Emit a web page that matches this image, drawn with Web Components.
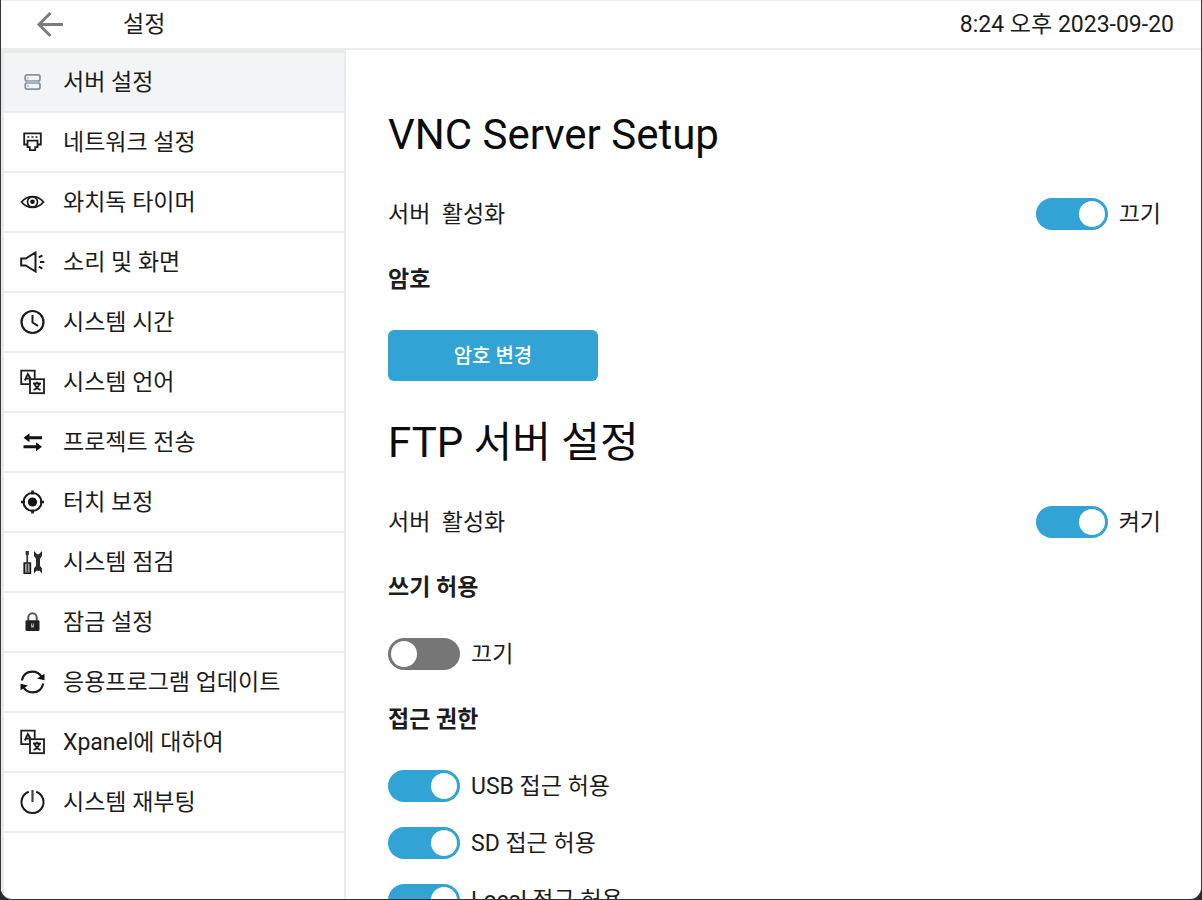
<!DOCTYPE html>
<html lang="ko">
<head>
<meta charset="utf-8">
<meta name="viewport" content="width=device-width, initial-scale=1">
<title>설정</title>
<style>
  html { background: #2b2b2e; }
  body { margin: 0; font-family: Roboto, "Noto Sans CJK KR", sans-serif; font-size: 23px; line-height: 32px; color: #1c1c1c; }
</style>
</head>
<body>
<settings-app></settings-app>
<script>
const ICONS = {
  server: '<g fill="none" stroke="#87929c" stroke-width="1.8"><rect x="5.2" y="4.800" width="14.800" height="6.400" rx="2.200"/><rect x="5.200" y="12.800" width="14.800" height="6.400" rx="2.200"/></g><path d="M6.500 11.200h12v1.600h-12z" fill="#b4bbc1"/><path d="M8 7.300v1.800M8 15.100v1.800" stroke="#87929c"/>',
  network: '<path d="M7.500 14.500H4.200V3.300h16.600v11.200h-3.300M7.500 10.700h10v6.500h-2.300v3H9.800v-3H7.500z" fill="none" stroke="#1c1c1c" stroke-width="1.800"/><path d="M7.300 7h2M11.500 7h2M15.500 7h2" stroke="#1c1c1c" stroke-width="1.600"/>',
  eye: '<path d="M1.500 12C5 7.800 8.500 6.600 12.500 6.600S20 7.800 23.500 12C20 16.200 16.500 17.400 12.500 17.400S5 16.200 1.500 12z" fill="none" stroke="#1c1c1c" stroke-width="1.900"/><circle cx="12.500" cy="12" r="5" fill="none" stroke="#1c1c1c" stroke-width="1.700"/><circle cx="12.500" cy="11.700" r="2.300" fill="#111"/>',
  sound: '<path d="M1.200 8.500h4.500L15.500 2.500v19L5.700 15.500H1.200z" fill="none" stroke="#1c1c1c" stroke-width="2"/><path d="M18.800 7.400l3.600-2M20 12h4.300M18.800 16.600l3.600 2" stroke="#1c1c1c" stroke-width="2"/>',
  clock: '<circle cx="12.500" cy="12" r="11" fill="none" stroke="#1c1c1c" stroke-width="2.200"/><path d="M12.500 5v7.500l5.500 3.300" fill="none" stroke="#1c1c1c" stroke-width="2"/>',
  language: '<g fill="none" stroke="#1c1c1c" stroke-width="1.800"><path d="M9.500 14.200H1.200V.7h13.500v8"/><rect x="10" y="9.200" width="14" height="14"/><path d="M4.800 10.500L7.900 4l2.600 4.500M6 8.700h4"/><path d="M13 13.500h8M17 11.700v1.800M19.300 14c-.8 3-3 5-5.800 6M14.700 14c.8 3 3 5 5.800 6"/></g>',
  transfer: '<path d="M3.500 7.800l6-4.500v3H22v3H9.500v3zM22 16.700l-6-4.500v3H3.500v3H16v3z" fill="#111"/>',
  target: '<circle cx="12.500" cy="12" r="9" fill="none" stroke="#1c1c1c" stroke-width="2.100"/><circle cx="12.500" cy="12" r="4.600" fill="#111"/><path d="M12.500.5v4M12.500 19.500v4M1 12h4M20 12h4" stroke="#1c1c1c" stroke-width="2.600"/>',
  tools: '<path d="M5.600 1h3.300v3.500l-.8 1v7.300H6.400V5.500l-.8-1z" fill="#333"/><path d="M4.200 13h6.200v10.300H4.200z" fill="#999" stroke="#1c1c1c" stroke-width="1.600"/><path d="M7.300 13.500v9" stroke="#333"/><path d="M14 1l3.200 3.300h1.600L22 1v5l-2 2.700v7L22 18.500v5l-2.400-2.700h-3.200L14 23.500v-5l2-2.800v-7L14 6z" fill="#2a2a2a"/>',
  lock: '<path d="M8.300 11V7.500a4.200 4.200 0 0 1 8.400 0V11" fill="none" stroke="#555" stroke-width="2"/><rect x="5.500" y="10.300" width="14" height="10.700" rx="1.200" fill="#222"/><path d="M11 13.500h3v4h-3z" fill="#aaa"/><path d="M12 13.500h1v2h-1z" fill="#333"/>',
  refresh: '<path d="M1.800 10.500C3 4.800 7 1.600 12.500 1.600c4 0 7.200 2 9.200 5.200M23.200 13.500c-1.200 5.700-5.200 8.900-10.700 8.900-4 0-7.200-2-9.200-5.200" fill="none" stroke="#1c1c1c" stroke-width="2.200"/><path d="M24.500 3.800v6.500L17 8.600zM.5 20.200v-6.500L8 15.400z" fill="#111"/>',
  power: '<path d="M8.800 1.700a11 11 0 1 0 7.400 0" fill="none" stroke="#1c1c1c" stroke-width="2.100"/><path d="M12.500 0v12" stroke="#444" stroke-width="2.200"/>'
};

function define(name, build) {
  customElements.define(name, class extends HTMLElement {
    connectedCallback() {
      if (this.shadowRoot) return;
      this.attachShadow({ mode: 'open' }).innerHTML = build(this);
    }
  });
}

define('settings-header', () => `
<style>
  :host { display: flex; flex: none; box-sizing: border-box; height: 50px; align-items: center; padding: 0 27px 0 35px; border-top: 1px solid #ececec; border-bottom: 2px solid #e9eaea; }
  button { display: flex; padding: 0; border: 0; background: none; }
  h1 { flex: 1; margin: 0 0 0 59px; font: inherit; }
  svg { display: block; }
</style>
<button aria-label="뒤로"><svg width="28" height="28" viewBox="0 0 28 28"><path d="M14.500 2L3 13.500l11.500 11.500M3.500 13.500H27" fill="none" stroke="#7c7c7c" stroke-width="3"/></svg></button>
<h1><slot></slot></h1>
<slot name="time"></slot>`);

define('nav-item', el => `
<style>
  :host { display: block; border-bottom: 2px solid #ebecec; }
  :host([active]) { background: #f3f4f6; }
  a { display: flex; align-items: center; height: 58px; padding-left: 16px; gap: 18px; color: inherit; text-decoration: none; }
  svg { flex: none; display: block; overflow: visible; }
  span { padding-top: 2px; }
</style>
<a href="#${el.getAttribute('icon')}"${el.hasAttribute('active') ? ' aria-current="page"' : ''}><svg width="25" height="24" viewBox="0 0 25 24" aria-hidden="true">${ICONS[el.getAttribute('icon')]}</svg><span><slot></slot></span></a>`);

define('toggle-switch', el => `
<style>
  :host { display: block; }
  label { display: flex; align-items: center; gap: 11px; height: 32px; }
  input { appearance: none; flex: none; display: flex; align-items: center; box-sizing: border-box; width: 72px; height: 32px; margin: 0; padding: 0 3px; border-radius: 16px; background: #767676; }
  input::before { content: ""; width: 26px; height: 26px; border-radius: 50%; background: #fff; }
  input:checked { background: #31a3d4; justify-content: flex-end; }
  span { padding-top: 2px; }
</style>
<label><input type="checkbox" role="switch"${el.hasAttribute('checked') ? ' checked' : ''}><span><slot></slot></span></label>`);

define('setting-row', () => `
<style>
  :host { display: flex; justify-content: space-between; align-items: center; height: 32px; }
  span { white-space: pre; padding-top: 2px; }
</style>
<span><slot></slot></span><slot name="control"></slot>`);

define('action-button', () => `
<style>
  :host { display: block; }
  button { width: 210px; height: 51px; border: 0; border-radius: 6px; background: #31a3d4; color: #fff; font: inherit; font-size: 20px; font-weight: 500; }
</style>
<button><slot></slot></button>`);

define('setting-section', el => `
<style>
  :host { display: flex; flex-direction: column; gap: 34px; }
  h2 { margin: 0 0 -2px; font-size: 42px; line-height: 62px; font-weight: 400; color: #0c0c0c; }
</style>
<h2>${el.getAttribute('heading')}</h2><slot></slot>`);

define('setting-group', el => `
<style>
  :host { display: flex; flex-direction: column; gap: 34px; }
  h3 { margin: 0; font-size: inherit; font-weight: 700; }
  div { display: flex; flex-direction: column; gap: 25px; }
</style>
<h3>${el.getAttribute('heading')}</h3><div><slot></slot></div>`);

define('settings-app', () => `
<style>
  :host { display: flex; flex-direction: column; box-sizing: border-box; height: 100vh; overflow: hidden; background: #fff; border: solid #343436; border-width: 0 1px 1px; border-radius: 0 0 12px 12px; }
  .body { flex: 1; min-height: 0; display: flex; }
  nav { flex: none; box-sizing: border-box; width: 345px; border: solid #e9eaea; border-width: 3px 2px 0 3px; }
  main { flex: 1; display: flex; flex-direction: column; gap: 31px; padding: 54px 40px 0 42px; overflow: hidden; }
</style>
<settings-header>설정<time slot="time" datetime="2023-09-20T20:24">8:24 오후 2023-09-20</time></settings-header>
<div class="body">
  <nav>
    <nav-item icon="server" active>서버 설정</nav-item>
    <nav-item icon="network">네트워크 설정</nav-item>
    <nav-item icon="eye">와치독 타이머</nav-item>
    <nav-item icon="sound">소리 및 화면</nav-item>
    <nav-item icon="clock">시스템 시간</nav-item>
    <nav-item icon="language">시스템 언어</nav-item>
    <nav-item icon="transfer">프로젝트 전송</nav-item>
    <nav-item icon="target">터치 보정</nav-item>
    <nav-item icon="tools">시스템 점검</nav-item>
    <nav-item icon="lock">잠금 설정</nav-item>
    <nav-item icon="refresh">응용프로그램 업데이트</nav-item>
    <nav-item icon="language">Xpanel에 대하여</nav-item>
    <nav-item icon="power">시스템 재부팅</nav-item>
  </nav>
  <main>
    <setting-section heading="VNC Server Setup">
      <setting-row>서버  활성화<toggle-switch slot="control" checked>끄기</toggle-switch></setting-row>
      <setting-group heading="암호"><action-button>암호 변경</action-button></setting-group>
    </setting-section>
    <setting-section heading="FTP 서버 설정">
      <setting-row>서버  활성화<toggle-switch slot="control" checked>켜기</toggle-switch></setting-row>
      <setting-group heading="쓰기 허용"><toggle-switch>끄기</toggle-switch></setting-group>
      <setting-group heading="접근 권한">
        <toggle-switch checked>USB 접근 허용</toggle-switch>
        <toggle-switch checked>SD 접근 허용</toggle-switch>
        <toggle-switch checked>Local 접근 허용</toggle-switch>
      </setting-group>
    </setting-section>
  </main>
</div>`);
</script>
</body>
</html>
